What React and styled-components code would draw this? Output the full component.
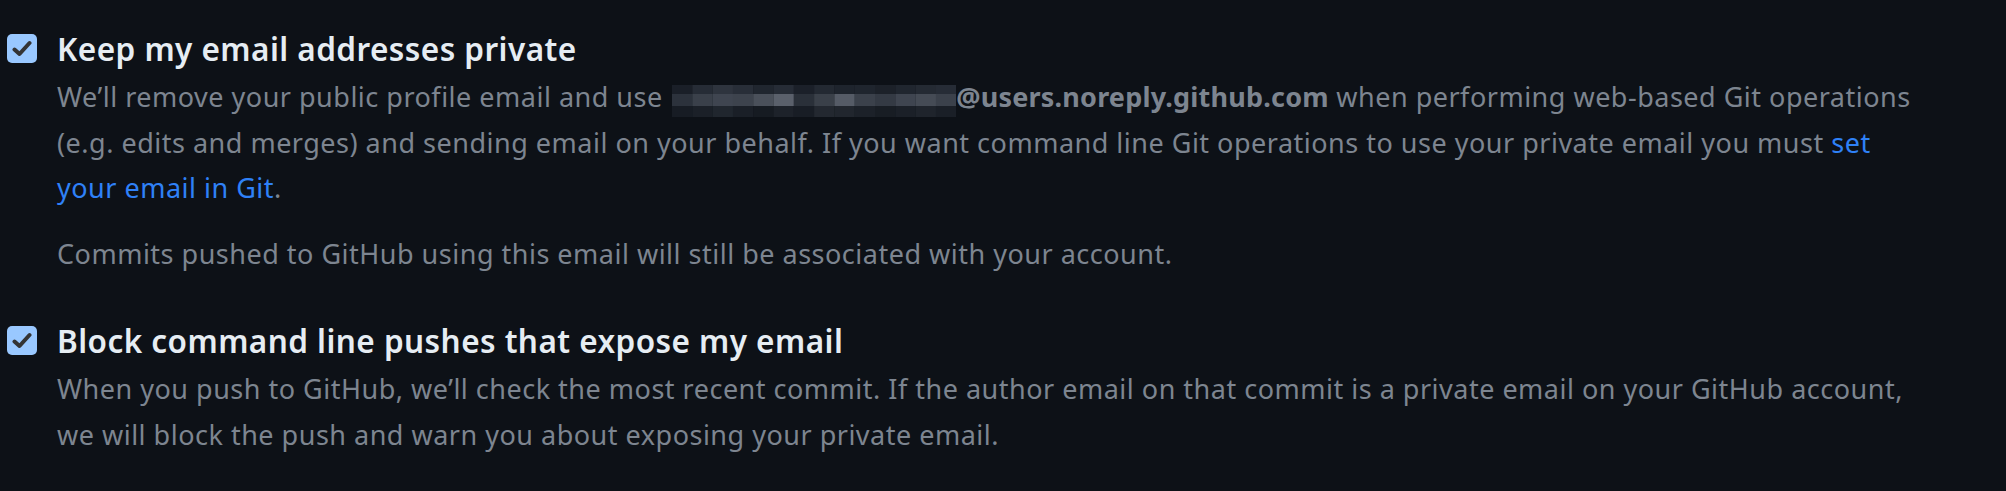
import React from 'react';
import styled, { createGlobalStyle } from 'styled-components';

const GlobalStyle = createGlobalStyle`
    html, body {
        margin: 0;
        background-color: #0d1117;
    }
    body {
        font-family: "Noto Sans", "Open Sans", sans-serif;
    }
`

const Wrapper = styled.section`
    width: 1925px;
    padding: 24px 0 0 7px;
    display: flex;
    flex-direction: column;
    gap: 40px;
`

const Option = styled.div`
    display: flex;
    align-items: flex-start;
    gap: 20px;
`

const Box = styled.span`
    flex: none;
    width: 30px;
    height: 29px;
    margin-top: 10px;
    border-radius: 5px;
    background-color: #99c8ff;
    display: flex;
    align-items: center;
    justify-content: center;
`

const Body = styled.div`
    flex: 1;
`

const Title = styled.div`
    color: #e6edf3;
    font-size: 31.5px;
    font-weight: 600;
    line-height: 50px;
    letter-spacing: 0.45px;
`

const Note = styled.p`
    margin: 0 0 ${p => p.$gap || 0}px;
    color: #7d8590;
    font-size: 27px;
    line-height: 45.5px;
    letter-spacing: 0.5px;
`

const Strong = styled.strong`
    font-weight: 700;
    letter-spacing: 0.2px;
`

const Link = styled.a`
    color: #2f81f7;
    text-decoration: none;
`

const Mosaic = styled.svg`
    display: inline-block;
    vertical-align: -10px;
    margin-left: 2px;
`

const Check = () => (
    <svg width="20" height="17" viewBox="0 0 20 17">
        <path d="M2.5 9.5 L7.5 14 L17.5 3" fill="none" stroke="#343434" strokeWidth="4" strokeLinecap="round" strokeLinejoin="round" />
    </svg>
)

const tiles = [
    ['#1a1f28', '#262c36', '#2e343e', '#282e38', '#20262f', '#262c36', '#1b2029', '#232932', '#1e242d', '#1f252e', '#1c2129', '#20262f', '#242a33', '#262c36'],
    ['#2c323c', '#3a404a', '#3f4550', '#3d434d', '#4a505a', '#5a606b', '#2a3039', '#3a4049', '#555b66', '#3b414b', '#343a44', '#3f4550', '#454b55', '#3b414b'],
    ['#171c24', '#1b2028', '#20262e', '#1a1f27', '#161b22', '#1d222a', '#181d25', '#232830', '#21262e', '#1c2129', '#181d24', '#1b2028', '#1f242c', '#1a1f27'],
]

const EmailMosaic = () => (
    <Mosaic width="284" height="32" viewBox="0 0 284 32">
        {tiles.map((row, r) => row.map((c, i) => (
            <rect key={`${r}-${i}`} x={i * 20.3} y={[0, 9, 21][r]} width="20.4" height={[9, 12, 11][r]} fill={c} />
        )))}
    </Mosaic>
)

const App = () => {
    return (
        <>
            <GlobalStyle />
            <Wrapper>
                <Option>
                    <Box><Check /></Box>
                    <Body>
                        <Title>Keep my email addresses private</Title>
                        <Note $gap={20}>
                            We’ll remove your public profile email and use <EmailMosaic /><Strong>@users.noreply.github.com</Strong> when performing web-based Git operations (e.g. edits and merges) and sending email on your behalf. If you want command line Git operations to use your private email you must <Link href="#">set your email in Git</Link>.
                        </Note>
                        <Note>
                            Commits pushed to GitHub using this email will still be associated with your account.
                        </Note>
                    </Body>
                </Option>
                <Option>
                    <Box><Check /></Box>
                    <Body>
                        <Title>Block command line pushes that expose my email</Title>
                        <Note>
                            When you push to GitHub, we’ll check the most recent commit. If the author email on that commit is a private email on your GitHub account, we will block the push and warn you about exposing your private email.
                        </Note>
                    </Body>
                </Option>
            </Wrapper>
        </>
    );
}

export default App;
